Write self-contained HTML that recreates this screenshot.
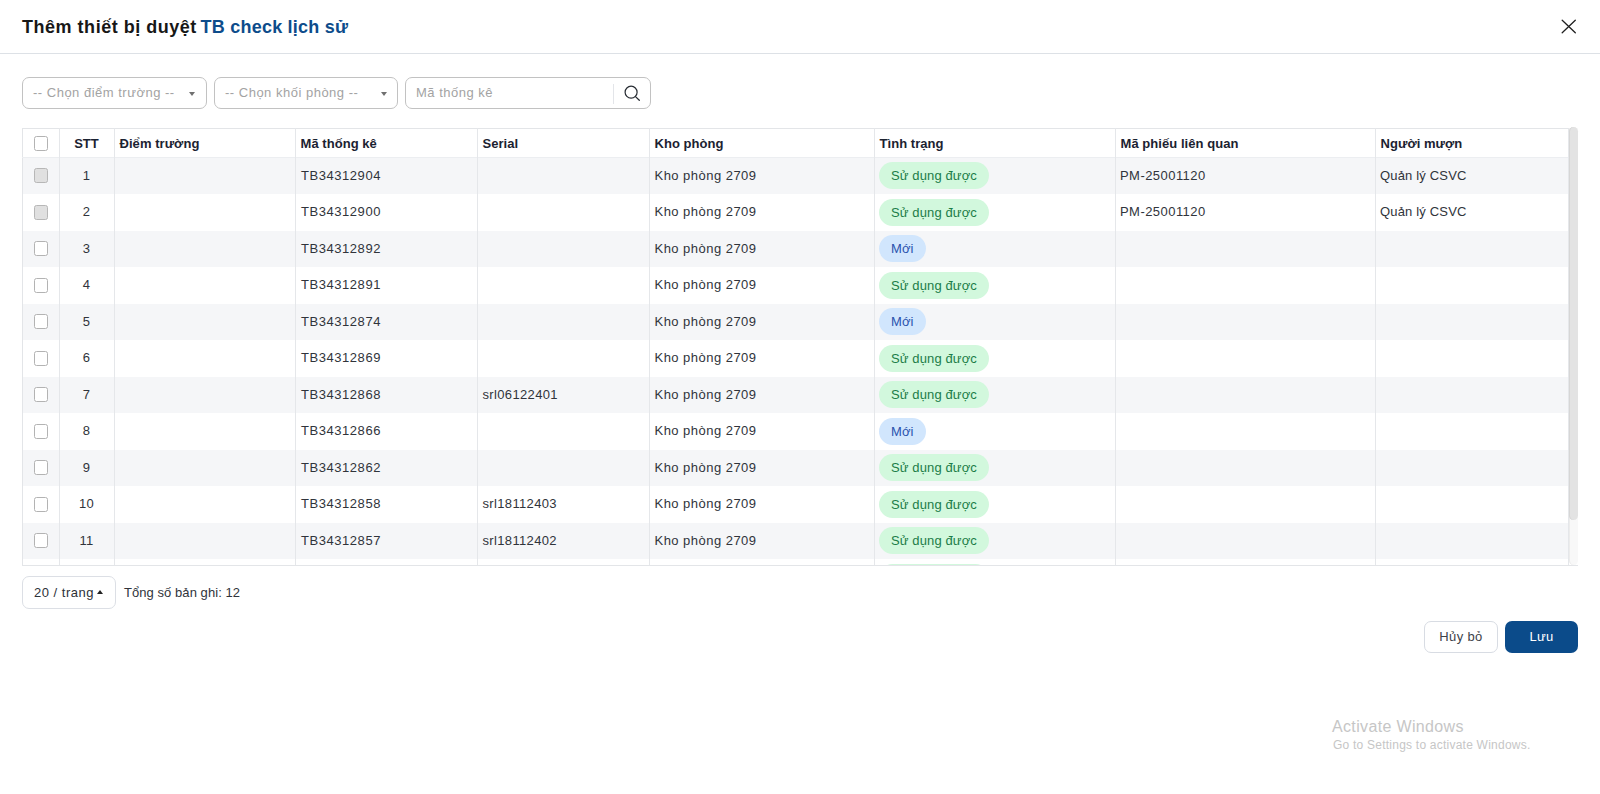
<!DOCTYPE html><html><head><meta charset="utf-8"><style>
*{margin:0;padding:0;box-sizing:border-box}
html,body{width:1600px;height:794px;overflow:hidden;background:#fff;font-family:"Liberation Sans",sans-serif;color:#1f2937;letter-spacing:0.35px}
.abs{position:absolute}
.title{left:22px;top:15px;font-size:18px;font-weight:bold;color:#171717;white-space:nowrap;line-height:24px;letter-spacing:0.34px}
.title span{color:#0d4c8b}
.sel{border:1px solid #c2c2c2;border-radius:7px;height:32px;background:#fff}
.ph{color:#a3a3a3;font-size:13px;white-space:nowrap;line-height:30px;letter-spacing:0.5px}
.caret{width:0;height:0;border-left:3.5px solid transparent;border-right:3.5px solid transparent;border-top:4px solid #707070}
.cell{position:absolute;font-size:13px;white-space:nowrap;color:#30343b;line-height:16px}
.hcell{position:absolute;font-size:13px;font-weight:bold;white-space:nowrap;color:#1b2231;line-height:16px;letter-spacing:0.05px}
.vline{position:absolute;width:1px;background:#e5e7ea}
.rowbg{position:absolute;height:36.5px}
.cb{position:absolute;width:14px;height:15px;border:1px solid #b3b3b3;border-radius:2.5px;background:#fff}
.cb.dis{background:#e0e0e0;border-color:#b7b7b7}
.badge{position:absolute;height:27px;border-radius:14px;font-size:13px;line-height:27px;white-space:nowrap;padding:0 12px;letter-spacing:0.12px}
.bs{background:#d2f8dd;color:#1c7d48}
.bm{background:#d1e6fd;color:#2a52ad}
.btn{border-radius:7px;height:32px;font-size:13px;line-height:30px;text-align:center}
</style></head><body>
<div class="abs title" style="letter-spacing:0.52px">Thêm thiết bị duyệt</div>
<div class="abs title" style="left:200.5px;letter-spacing:0.23px;color:#0d4c8b">TB check lịch sử</div>
<svg class="abs" style="left:1560px;top:18px" width="18" height="18" viewBox="0 0 18 18"><path d="M2.2 2.3L15.3 14.7M15.3 2.3L2.2 14.7" stroke="#1f1f1f" stroke-width="1.3" stroke-linecap="round"/></svg>
<div class="abs" style="left:0;top:53px;width:1600px;height:1px;background:#dde1e6"></div>
<div class="abs sel" style="left:22px;top:76.6px;width:185px"><div class="abs ph" style="left:10px;top:0">-- Chọn điểm trường --</div><div class="abs caret" style="left:166px;top:14px"></div></div>
<div class="abs sel" style="left:214px;top:76.6px;width:184px"><div class="abs ph" style="left:10px;top:0">-- Chọn khối phòng --</div><div class="abs caret" style="left:166px;top:14px"></div></div>
<div class="abs sel" style="left:405px;top:76.6px;width:246px"><div class="abs ph" style="left:10px;top:0">Mã thống kê</div><div class="abs" style="left:207px;top:6px;width:1px;height:20px;background:#e3e5e9"></div><svg class="abs" style="left:217px;top:6px" width="20" height="20" viewBox="0 0 20 20"><circle cx="8.1" cy="8.2" r="6" fill="none" stroke="#272c33" stroke-width="1.2"/><path d="M12.5 12.6L16.3 16.3" stroke="#272c33" stroke-width="1.3" stroke-linecap="round"/></svg></div>
<div class="abs rowbg" style="left:23px;top:157.5px;width:1545px;height:36.5px;background:#f5f6f8"></div>
<div class="abs rowbg" style="left:23px;top:194.0px;width:1545px;height:36.5px;background:#ffffff"></div>
<div class="abs rowbg" style="left:23px;top:230.5px;width:1545px;height:36.5px;background:#f5f6f8"></div>
<div class="abs rowbg" style="left:23px;top:267.0px;width:1545px;height:36.5px;background:#ffffff"></div>
<div class="abs rowbg" style="left:23px;top:303.5px;width:1545px;height:36.5px;background:#f5f6f8"></div>
<div class="abs rowbg" style="left:23px;top:340.0px;width:1545px;height:36.5px;background:#ffffff"></div>
<div class="abs rowbg" style="left:23px;top:376.5px;width:1545px;height:36.5px;background:#f5f6f8"></div>
<div class="abs rowbg" style="left:23px;top:413.0px;width:1545px;height:36.5px;background:#ffffff"></div>
<div class="abs rowbg" style="left:23px;top:449.5px;width:1545px;height:36.5px;background:#f5f6f8"></div>
<div class="abs rowbg" style="left:23px;top:486.0px;width:1545px;height:36.5px;background:#ffffff"></div>
<div class="abs rowbg" style="left:23px;top:522.5px;width:1545px;height:36.5px;background:#f5f6f8"></div>
<div class="abs rowbg" style="left:23px;top:559.0px;width:1545px;height:6.0px;background:#ffffff"></div>
<div class="abs" style="left:22px;top:128px;width:1546px;height:1px;background:#e3e5e8"></div>
<div class="abs" style="left:22px;top:128px;width:1px;height:437px;background:#e3e5e8"></div>
<div class="abs" style="left:22px;top:157px;width:1546px;height:1px;background:#eceef1"></div>
<div class="abs" style="left:22px;top:565px;width:1556px;height:1px;background:#e3e5e8"></div>
<div class="abs vline" style="left:59px;top:128px;height:437px"></div>
<div class="abs vline" style="left:114px;top:128px;height:437px"></div>
<div class="abs vline" style="left:295px;top:128px;height:437px"></div>
<div class="abs vline" style="left:477px;top:128px;height:437px"></div>
<div class="abs vline" style="left:649px;top:128px;height:437px"></div>
<div class="abs vline" style="left:874px;top:128px;height:437px"></div>
<div class="abs vline" style="left:1115px;top:128px;height:437px"></div>
<div class="abs vline" style="left:1375px;top:128px;height:437px"></div>
<div class="abs vline" style="left:1568px;top:128px;height:437px"></div>
<div class="cb" style="left:34px;top:136px"></div>
<div class="hcell" style="left:59px;width:55px;text-align:center;top:135.5px">STT</div>
<div class="hcell" style="left:119.5px;top:135.5px">Điểm trường</div>
<div class="hcell" style="left:300.5px;top:135.5px">Mã thống kê</div>
<div class="hcell" style="left:482.5px;top:135.5px">Serial</div>
<div class="hcell" style="left:654.5px;top:135.5px">Kho phòng</div>
<div class="hcell" style="left:879.5px;top:135.5px">Tình trạng</div>
<div class="hcell" style="left:1120.5px;top:135.5px">Mã phiếu liên quan</div>
<div class="hcell" style="left:1380.5px;top:135.5px">Người mượn</div>
<div class="cb dis" style="left:34px;top:168.25px"></div>
<div class="cell" style="left:59px;width:55px;text-align:center;top:167.75px">1</div>
<div class="cell" style="left:301px;top:167.75px;letter-spacing:0.55px">TB34312904</div>
<div class="cell" style="left:654.5px;top:167.75px;letter-spacing:0.47px">Kho phòng 2709</div>
<div class="cell" style="left:1120px;top:167.75px;letter-spacing:0.45px">PM-25001120</div>
<div class="cell" style="left:1380px;top:167.75px;letter-spacing:0.17px">Quản lý CSVC</div>
<div class="abs" style="left:879px;top:162.25px;width:110px;height:27px;overflow:hidden"><div class="badge bs" style="left:0;top:0">Sử dụng được</div></div>
<div class="cb dis" style="left:34px;top:204.75px"></div>
<div class="cell" style="left:59px;width:55px;text-align:center;top:204.25px">2</div>
<div class="cell" style="left:301px;top:204.25px;letter-spacing:0.55px">TB34312900</div>
<div class="cell" style="left:654.5px;top:204.25px;letter-spacing:0.47px">Kho phòng 2709</div>
<div class="cell" style="left:1120px;top:204.25px;letter-spacing:0.45px">PM-25001120</div>
<div class="cell" style="left:1380px;top:204.25px;letter-spacing:0.17px">Quản lý CSVC</div>
<div class="abs" style="left:879px;top:198.75px;width:110px;height:27px;overflow:hidden"><div class="badge bs" style="left:0;top:0">Sử dụng được</div></div>
<div class="cb " style="left:34px;top:241.25px"></div>
<div class="cell" style="left:59px;width:55px;text-align:center;top:240.75px">3</div>
<div class="cell" style="left:301px;top:240.75px;letter-spacing:0.55px">TB34312892</div>
<div class="cell" style="left:654.5px;top:240.75px;letter-spacing:0.47px">Kho phòng 2709</div>
<div class="abs" style="left:879px;top:235.25px;width:60px;height:27px;overflow:hidden"><div class="badge bm" style="left:0;top:0">Mới</div></div>
<div class="cb " style="left:34px;top:277.75px"></div>
<div class="cell" style="left:59px;width:55px;text-align:center;top:277.25px">4</div>
<div class="cell" style="left:301px;top:277.25px;letter-spacing:0.55px">TB34312891</div>
<div class="cell" style="left:654.5px;top:277.25px;letter-spacing:0.47px">Kho phòng 2709</div>
<div class="abs" style="left:879px;top:271.75px;width:110px;height:27px;overflow:hidden"><div class="badge bs" style="left:0;top:0">Sử dụng được</div></div>
<div class="cb " style="left:34px;top:314.25px"></div>
<div class="cell" style="left:59px;width:55px;text-align:center;top:313.75px">5</div>
<div class="cell" style="left:301px;top:313.75px;letter-spacing:0.55px">TB34312874</div>
<div class="cell" style="left:654.5px;top:313.75px;letter-spacing:0.47px">Kho phòng 2709</div>
<div class="abs" style="left:879px;top:308.25px;width:60px;height:27px;overflow:hidden"><div class="badge bm" style="left:0;top:0">Mới</div></div>
<div class="cb " style="left:34px;top:350.75px"></div>
<div class="cell" style="left:59px;width:55px;text-align:center;top:350.25px">6</div>
<div class="cell" style="left:301px;top:350.25px;letter-spacing:0.55px">TB34312869</div>
<div class="cell" style="left:654.5px;top:350.25px;letter-spacing:0.47px">Kho phòng 2709</div>
<div class="abs" style="left:879px;top:344.75px;width:110px;height:27px;overflow:hidden"><div class="badge bs" style="left:0;top:0">Sử dụng được</div></div>
<div class="cb " style="left:34px;top:387.25px"></div>
<div class="cell" style="left:59px;width:55px;text-align:center;top:386.75px">7</div>
<div class="cell" style="left:301px;top:386.75px;letter-spacing:0.55px">TB34312868</div>
<div class="cell" style="left:482.5px;top:386.75px">srl06122401</div>
<div class="cell" style="left:654.5px;top:386.75px;letter-spacing:0.47px">Kho phòng 2709</div>
<div class="abs" style="left:879px;top:381.25px;width:110px;height:27px;overflow:hidden"><div class="badge bs" style="left:0;top:0">Sử dụng được</div></div>
<div class="cb " style="left:34px;top:423.75px"></div>
<div class="cell" style="left:59px;width:55px;text-align:center;top:423.25px">8</div>
<div class="cell" style="left:301px;top:423.25px;letter-spacing:0.55px">TB34312866</div>
<div class="cell" style="left:654.5px;top:423.25px;letter-spacing:0.47px">Kho phòng 2709</div>
<div class="abs" style="left:879px;top:417.75px;width:60px;height:27px;overflow:hidden"><div class="badge bm" style="left:0;top:0">Mới</div></div>
<div class="cb " style="left:34px;top:460.25px"></div>
<div class="cell" style="left:59px;width:55px;text-align:center;top:459.75px">9</div>
<div class="cell" style="left:301px;top:459.75px;letter-spacing:0.55px">TB34312862</div>
<div class="cell" style="left:654.5px;top:459.75px;letter-spacing:0.47px">Kho phòng 2709</div>
<div class="abs" style="left:879px;top:454.25px;width:110px;height:27px;overflow:hidden"><div class="badge bs" style="left:0;top:0">Sử dụng được</div></div>
<div class="cb " style="left:34px;top:496.75px"></div>
<div class="cell" style="left:59px;width:55px;text-align:center;top:496.25px">10</div>
<div class="cell" style="left:301px;top:496.25px;letter-spacing:0.55px">TB34312858</div>
<div class="cell" style="left:482.5px;top:496.25px">srl18112403</div>
<div class="cell" style="left:654.5px;top:496.25px;letter-spacing:0.47px">Kho phòng 2709</div>
<div class="abs" style="left:879px;top:490.75px;width:110px;height:27px;overflow:hidden"><div class="badge bs" style="left:0;top:0">Sử dụng được</div></div>
<div class="cb " style="left:34px;top:533.25px"></div>
<div class="cell" style="left:59px;width:55px;text-align:center;top:532.75px">11</div>
<div class="cell" style="left:301px;top:532.75px;letter-spacing:0.55px">TB34312857</div>
<div class="cell" style="left:482.5px;top:532.75px">srl18112402</div>
<div class="cell" style="left:654.5px;top:532.75px;letter-spacing:0.47px">Kho phòng 2709</div>
<div class="abs" style="left:879px;top:527.25px;width:110px;height:27px;overflow:hidden"><div class="badge bs" style="left:0;top:0">Sử dụng được</div></div>
<div class="abs" style="left:879px;top:563.75px;width:110px;height:1.25px;overflow:hidden"><div class="badge bs" style="left:0;top:0">Sử dụng được</div></div>
<div class="abs" style="left:1569px;top:127px;width:9px;height:438px;border-radius:4.5px;background:#f8f8f8;box-shadow:inset 1px 0 0 #ececec"></div>
<div class="abs" style="left:1569px;top:127px;width:9px;height:393px;border-radius:4.5px;background:#e3e3e3;box-shadow:inset 1px 0 0 #d6d6d6"></div>
<div class="abs sel" style="left:22px;top:576px;width:94px;height:33px;border-color:#dcdfe5"><div class="abs" style="left:11px;top:0;font-size:13px;line-height:31px;color:#2d3138;white-space:nowrap;letter-spacing:0.5px">20 / trang</div><div class="abs" style="left:74px;top:13px;width:0;height:0;border-left:3.5px solid transparent;border-right:3.5px solid transparent;border-bottom:4px solid #222"></div></div>
<div class="abs" style="left:124px;top:584.5px;font-size:13px;line-height:16px;color:#30343b;white-space:nowrap;letter-spacing:0.06px">Tổng số bản ghi: 12</div>
<div class="abs btn" style="left:1424px;top:620.5px;width:74px;border:1px solid #d8dce3;color:#3d4249;background:#fff;line-height:29px">Hủy bỏ</div>
<div class="abs btn" style="left:1505px;top:620.5px;width:73px;background:#0b4b8a;color:#fff;line-height:31px">Lưu</div>
<div class="abs" style="left:1332px;top:716.5px;font-size:16px;line-height:20px;color:#c6c6c6;white-space:nowrap">Activate Windows</div>
<div class="abs" style="left:1333px;top:738px;font-size:12px;line-height:15px;color:#c6c6c6;white-space:nowrap;letter-spacing:0.23px">Go to Settings to activate Windows.</div>
</body></html>
